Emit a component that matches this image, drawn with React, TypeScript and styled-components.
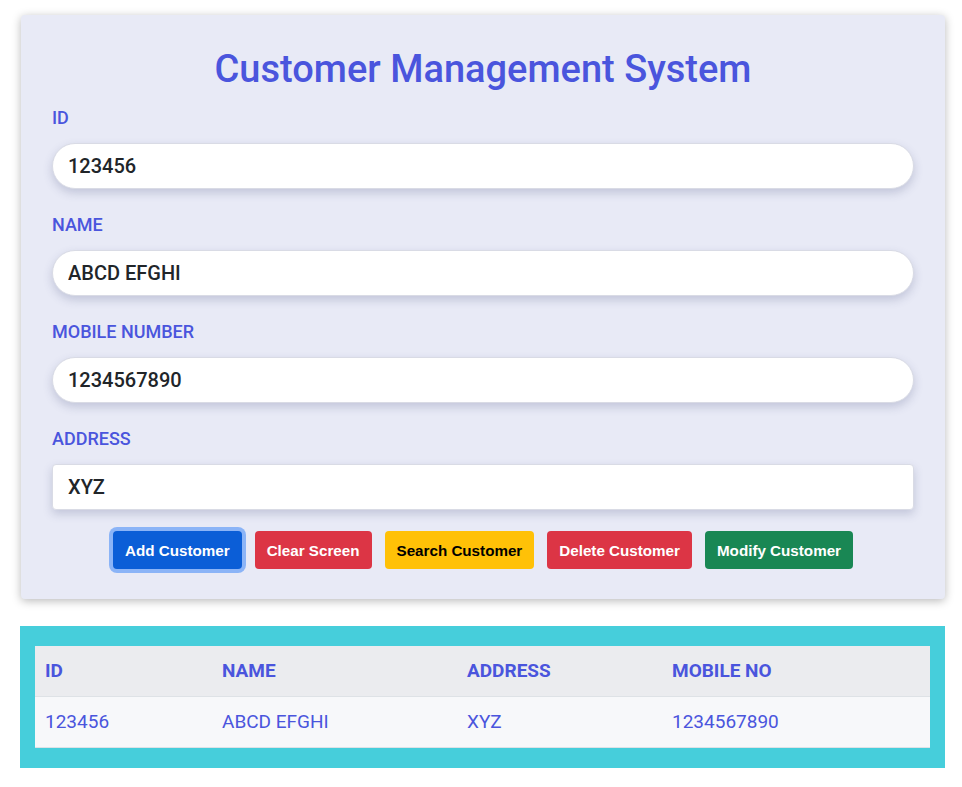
import React from "react";
import styled, { createGlobalStyle } from "styled-components";

const Global = createGlobalStyle`
  html, body { margin: 0; padding: 0; background: #ffffff; }
  body { font-family: "Liberation Sans", Arial, sans-serif; }
  * { box-sizing: border-box; }
`;

const Page = styled.div`
  padding: 15px 17px 20px 20px;
  display: flex;
  flex-direction: column;
  gap: 27px;
`;

const Card = styled.div`
  margin-left: 1px;
  background: #e8eaf6;
  border-radius: 4px;
  box-shadow: 0 2px 10px rgba(0, 0, 0, 0.28);
  padding: 30px 31px 30px 31px;
  display: flex;
  flex-direction: column;
`;

const Title = styled.h1`
  margin: 0 0 14px 0;
  text-align: center;
  font-family: Roboto, "Liberation Sans", sans-serif;
  font-weight: 500;
  font-size: 38px;
  line-height: 48px;
  color: #4a55dd;
`;

const Field = styled.div`
  display: flex;
  flex-direction: column;
  margin-bottom: 25px;
`;

const Label = styled.label`
  font-family: Roboto, "Liberation Sans", sans-serif;
  font-weight: 500;
  font-size: 18px;
  line-height: 22px;
  color: #4a55dd;
  margin-bottom: 14px;
`;

const Input = styled.input<{ $pill?: boolean }>`
  height: 46px;
  width: 100%;
  border: 1px solid #d9dbe5;
  border-radius: ${(p) => (p.$pill ? "23px" : "4px")};
  background: #ffffff;
  padding: 0 15px;
  font-family: Roboto, "Liberation Sans", sans-serif;
  font-weight: 500;
  font-size: 20px;
  color: #212529;
  box-shadow: 0 4px 10px rgba(60, 70, 120, 0.22);
  outline: none;
`;

const ButtonRow = styled.div`
  display: flex;
  justify-content: center;
  gap: 13px;
  margin-top: -4px;
`;

const variants: Record<string, { bg: string; fg: string }> = {
  primary: { bg: "#0b5ed7", fg: "#ffffff" },
  danger: { bg: "#dc3545", fg: "#ffffff" },
  warning: { bg: "#ffc107", fg: "#000000" },
  success: { bg: "#198754", fg: "#ffffff" },
};

const Button = styled.button<{ $variant: string; $focus?: boolean }>`
  height: 38px;
  padding: 0 12px;
  border: none;
  border-radius: 4px;
  font-family: "Liberation Sans", Arial, sans-serif;
  font-weight: 700;
  font-size: 15.2px;
  background: ${(p) => variants[p.$variant].bg};
  color: ${(p) => variants[p.$variant].fg};
  box-shadow: ${(p) => (p.$focus ? "0 0 0 4px #8bb4f7" : "none")};
  cursor: pointer;
`;

const TableWrap = styled.div`
  background: #46cedb;
  padding: 20px 15px 20px 15px;
  width: 925px;
`;

const Table = styled.table`
  width: 100%;
  border-collapse: collapse;
  font-family: Roboto, "Liberation Sans", sans-serif;
  font-size: 19px;
  color: #4a55dd;
`;

const Th = styled.th<{ $w: number }>`
  width: ${(p) => p.$w}px;
  text-align: left;
  background: #ebecef;
  height: 50px;
  padding: 0 10px;
  font-weight: 700;
  border-bottom: 1px solid #dee2e6;
`;

const Td = styled.td`
  background: #f7f8fa;
  height: 51px;
  padding: 0 10px;
  font-weight: 400;
  border-bottom: 1px solid #dee2e6;
`;

export default function App() {
  return (
    <>
      <Global />
      <Page>
        <Card>
          <Title>Customer Management System</Title>
          <Field>
            <Label>ID</Label>
            <Input $pill defaultValue="123456" />
          </Field>
          <Field>
            <Label>NAME</Label>
            <Input $pill defaultValue="ABCD EFGHI" />
          </Field>
          <Field>
            <Label>MOBILE NUMBER</Label>
            <Input $pill defaultValue="1234567890" />
          </Field>
          <Field>
            <Label>ADDRESS</Label>
            <Input defaultValue="XYZ" />
          </Field>
          <ButtonRow>
            <Button $variant="primary" $focus>Add Customer</Button>
            <Button $variant="danger">Clear Screen</Button>
            <Button $variant="warning">Search Customer</Button>
            <Button $variant="danger">Delete Customer</Button>
            <Button $variant="success">Modify Customer</Button>
          </ButtonRow>
        </Card>
        <TableWrap>
          <Table>
            <thead>
              <tr>
                <Th $w={177}>ID</Th>
                <Th $w={245}>NAME</Th>
                <Th $w={205}>ADDRESS</Th>
                <Th $w={268}>MOBILE NO</Th>
              </tr>
            </thead>
            <tbody>
              <tr>
                <Td>123456</Td>
                <Td>ABCD EFGHI</Td>
                <Td>XYZ</Td>
                <Td>1234567890</Td>
              </tr>
            </tbody>
          </Table>
        </TableWrap>
      </Page>
    </>
  );
}
